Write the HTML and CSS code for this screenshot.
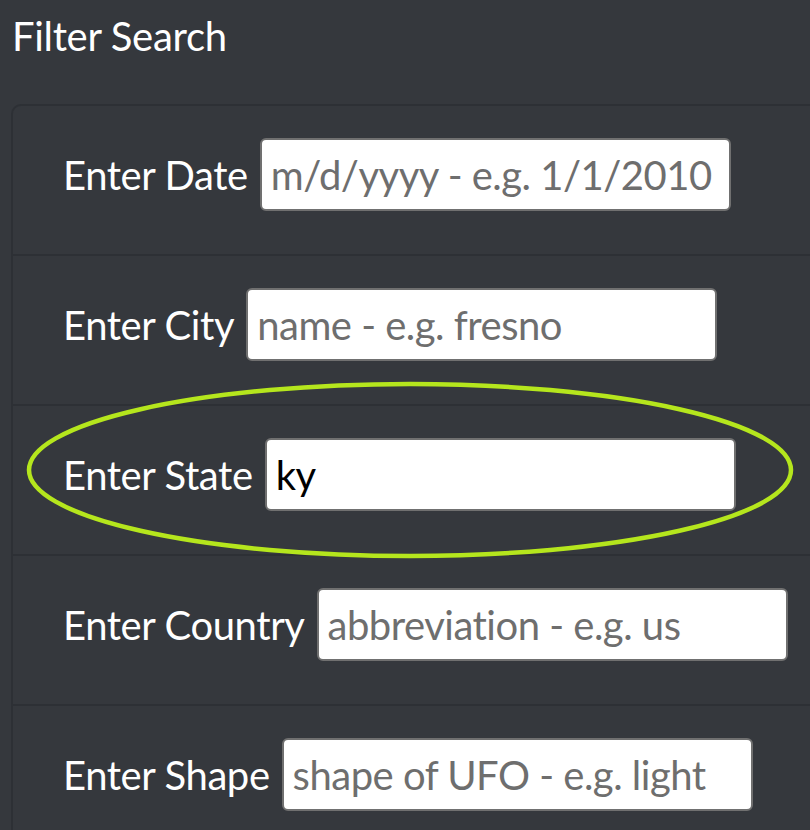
FILE: index.html
```html
<!DOCTYPE html>
<html>
<head>
<meta charset="utf-8">
<link rel="stylesheet" href="styles.css">
</head>
<body>
<h2 class="title">Filter Search</h2>
<ul class="panel">
  <li class="row"><label class="lbl" for="d">Enter Date</label><input id="d" class="field" placeholder="m/d/yyyy - e.g. 1/1/2010"></li>
  <li class="row"><label class="lbl" for="c">Enter City</label><input id="c" class="field" placeholder="name - e.g. fresno"></li>
  <li class="row"><label class="lbl" for="s">Enter State</label><input id="s" class="field" value="ky"></li>
  <li class="row"><label class="lbl" for="n">Enter Country</label><input id="n" class="field" placeholder="abbreviation - e.g. us"></li>
  <li class="row"><label class="lbl" for="h">Enter Shape</label><input id="h" class="field" placeholder="shape of UFO - e.g. light"></li>
</ul>
<svg class="ring" width="770" height="180" viewBox="0 0 770 180"><ellipse cx="385" cy="90" rx="381" ry="86" fill="none" stroke="#b5e61d" stroke-width="4.5"/></svg>
</body>
</html>
```
FILE: styles.css
```css
html, body {
  margin: 0;
  padding: 0;
  background: #35383d;
  overflow: hidden;
}
body {
  width: 810px;
  height: 830px;
  position: relative;
  font-family: "Lato", "Open Sans", sans-serif;
  color: #ffffff;
}
.title {
  margin: 0;
  padding: 12px 0 0 12px;
  height: 104px;
  box-sizing: border-box;
  font-size: 40px;
  font-weight: 400;
  line-height: 48px;
  letter-spacing: -0.3px;
}
.panel {
  list-style: none;
  margin: 0 0 0 11px;
  padding: 0;
  width: 830px;
  border: 2px solid #2d3035;
  border-radius: 10px;
}
.row {
  display: flex;
  align-items: center;
  gap: 12px;
  height: 150px;
  box-sizing: border-box;
  padding: 32px 50px 43px 50px;
  border-bottom: 2px solid #2d3035;
}
.lbl {
  font-size: 40px;
  line-height: 48px;
  letter-spacing: -0.4px;
  white-space: nowrap;
}
.field {
  width: 471px;
  height: 73px;
  box-sizing: border-box;
  border: 2px solid #707070;
  border-radius: 6px;
  background: #ffffff;
  padding: 0 9px;
  font-family: inherit;
  font-size: 40px;
  letter-spacing: -0.5px;
  color: #000000;
  outline: none;
}
.field::placeholder {
  color: #6e6e6e;
  opacity: 1;
}
.ring {
  position: absolute;
  left: 25px;
  top: 380px;
}
```
